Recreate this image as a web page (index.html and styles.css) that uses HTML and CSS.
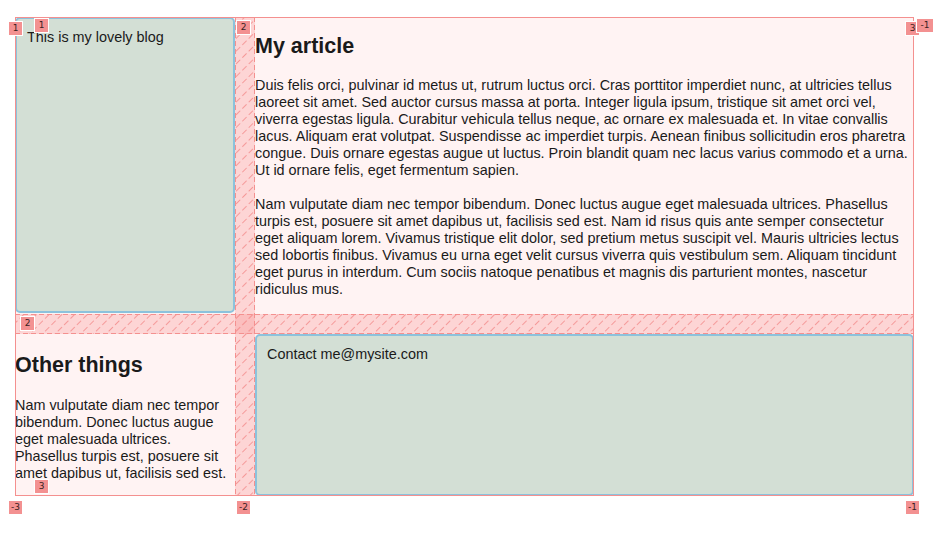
FILE: index.html
```html
<!DOCTYPE html>
<html lang="en">
<head>
<meta charset="utf-8">
<title>Grid layout</title>
<link rel="stylesheet" href="styles.css">
</head>
<body>
<div class="grid">
  <header class="box blog">This is my lovely blog</header>
  <article class="article">
    <h2>My article</h2>
    <p>Duis felis orci, pulvinar id metus ut, rutrum luctus orci. Cras porttitor imperdiet nunc, at ultricies tellus laoreet sit amet. Sed auctor cursus massa at porta. Integer ligula ipsum, tristique sit amet orci vel, viverra egestas ligula. Curabitur vehicula tellus neque, ac ornare ex malesuada et. In vitae convallis lacus. Aliquam erat volutpat. Suspendisse ac imperdiet turpis. Aenean finibus sollicitudin eros pharetra congue. Duis ornare egestas augue ut luctus. Proin blandit quam nec lacus varius commodo et a urna. Ut id ornare felis, eget fermentum sapien.</p>
    <p>Nam vulputate diam nec tempor bibendum. Donec luctus augue eget malesuada ultrices. Phasellus turpis est, posuere sit amet dapibus ut, facilisis sed est. Nam id risus quis ante semper consectetur eget aliquam lorem. Vivamus tristique elit dolor, sed pretium metus suscipit vel. Mauris ultricies lectus sed lobortis finibus. Vivamus eu urna eget velit cursus viverra quis vestibulum sem. Aliquam tincidunt eget purus in interdum. Cum sociis natoque penatibus et magnis dis parturient montes, nascetur ridiculus mus.</p>
  </article>
  <aside class="other">
    <h2>Other things</h2>
    <p>Nam vulputate diam nec tempor bibendum. Donec luctus augue eget malesuada ultrices. Phasellus turpis est, posuere sit amet dapibus ut, facilisis sed est.</p>
  </aside>
  <footer class="box contact">Contact me@mysite.com</footer>

  <svg class="overlay" width="900" height="480" viewBox="0 0 900 480" aria-hidden="true">
    <defs>
      <pattern id="hatch" width="9" height="9" patternUnits="userSpaceOnUse" patternTransform="rotate(45)">
        <line x1="0.5" y1="0" x2="0.5" y2="9" stroke="#f59a9a" stroke-width="1" stroke-dasharray="3 3"/>
      </pattern>
    </defs>
    <rect x="220" y="0" width="20" height="479" fill="rgba(245,110,110,0.22)"/>
    <rect x="0" y="297" width="899" height="20" fill="rgba(245,110,110,0.22)"/>
    <rect x="220" y="0" width="20" height="479" fill="url(#hatch)"/>
    <rect x="0" y="297" width="899" height="20" fill="url(#hatch)"/>
    <g stroke="#f4908f" stroke-width="1" stroke-dasharray="5 3" fill="none">
      <line x1="220.5" y1="0" x2="220.5" y2="479"/>
      <line x1="239.5" y1="0" x2="239.5" y2="479"/>
      <line x1="0" y1="297.5" x2="899" y2="297.5"/>
      <line x1="0" y1="316.5" x2="899" y2="316.5"/>
    </g>
    <rect x="0.5" y="0.5" width="898" height="478" fill="none" stroke="#f4908f" stroke-width="1"/>
  </svg>

  <span class="label l-r1">1</span>
  <span class="label l-c1">1</span>
  <span class="label l-c2">2</span>
  <span class="label l-c3">3</span>
  <span class="label l-rn1">-1</span>
  <span class="label l-r2">2</span>
  <span class="label l-r3">3</span>
  <span class="label l-cn3">-3</span>
  <span class="label l-cn2">-2</span>
  <span class="label l-cn1">-1</span>
</div>
</body>
</html>
```

FILE: styles.css
```css
html, body {
  margin: 0;
  padding: 0;
  background: #ffffff;
}

body {
  font-family: "Liberation Sans", Arial, sans-serif;
  font-size: 14.4px;
  line-height: 17px;
  color: #1a1a1a;
  padding-bottom: 50px;
}

.grid {
  position: relative;
  display: grid;
  grid-template-columns: 220px 1fr;
  grid-template-rows: 297px 162px;
  gap: 20px;
  width: 899px;
  margin: 17px 0 0 15px;
  background: #fff3f3;
}

.box {
  background: #d3dfd5;
  border: 2px solid #8cc2dc;
  border-radius: 5px;
  padding: 10px 9px 9px 10px;
}

.blog {
  margin-bottom: 1px;
}

.article h2,
.other h2 {
  font-size: 21.5px;
  font-weight: bold;
  line-height: 25px;
}

.article h2 {
  margin: 17px 0 18px;
}

.other h2 {
  margin: 19px 0 19px;
}

.article p,
.other p {
  margin: 0 0 17px;
}

.overlay {
  position: absolute;
  left: 0;
  top: 0;
  overflow: visible;
  pointer-events: none;
}

.label {
  position: absolute;
  box-sizing: border-box;
  width: 15px;
  height: 15px;
  background: #f39191;
  border: 1px solid #ffffff;
  color: #3a1f1f;
  font-family: "DejaVu Sans", sans-serif;
  font-size: 9px;
  line-height: 13px;
  text-align: center;
}

.l-r1 { left: -7px; top: 4px; }
.l-c1 { left: 19px; top: 1px; }
.l-c2 { left: 221px; top: 3px; }
.l-c3 { left: 890px; top: 4px; }
.l-rn1 { left: 901px; top: 1px; width: 18px; }
.l-r2 { left: 5px; top: 299px; }
.l-r3 { left: 19px; top: 462px; }
.l-cn3 { left: -7px; top: 483px; }
.l-cn2 { left: 221px; top: 483px; }
.l-cn1 { left: 890px; top: 483px; }
```
